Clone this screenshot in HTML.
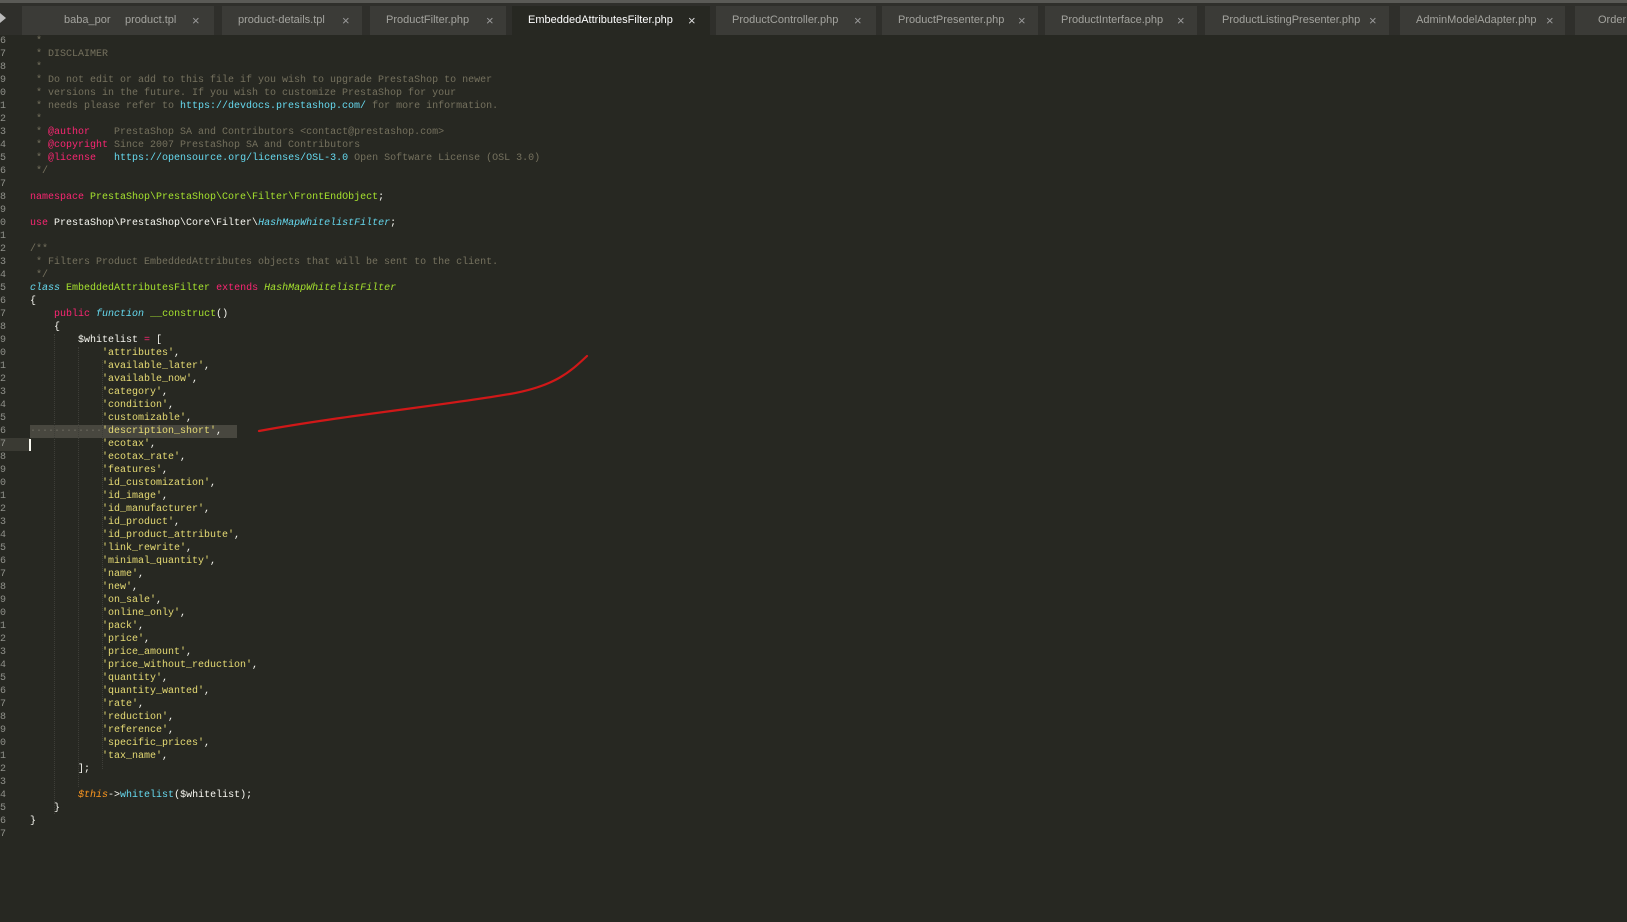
<!DOCTYPE html>
<html><head><meta charset="utf-8"><style>
html,body{margin:0;padding:0;width:1627px;height:922px;overflow:hidden;background:#272822;}
#tabs{position:absolute;left:0;top:0;width:1627px;height:35px;background:#2f2f2b;border-top:3px solid #5a5a56;box-sizing:border-box;}
.tab{position:absolute;top:3px;height:29px;background:#3b3b37;font:11px "Liberation Sans",sans-serif;color:#a3a39e;line-height:29px;white-space:nowrap;}
.tab.act{background:#272822;color:#fff;height:32px;}
.x{position:absolute;top:0;font-size:13px;color:#999;}
#ed{position:absolute;left:0;top:35px;font:10px/13px "Liberation Mono",monospace;color:#f8f8f2;white-space:pre;}
.ln{position:absolute;left:-4px;width:10px;text-align:right;color:#8f908a;}
.cd{position:absolute;left:30px;}
.c{color:#75715e}.k{color:#f92672}.g{color:#a6e22e}.b{color:#66d9ef}.i{font-style:italic}.s{color:#e6db74}.o{color:#fd971f}
.guide{position:absolute;width:0;border-left:1px dotted #3e3e38;}
</style></head><body>
<div id="tabs">
<div class="tab" style="left:22px;width:92px;"><span style="position:absolute;left:42px">baba_por</span></div>
<div class="tab" style="left:114px;width:100px;"><span style="position:absolute;left:11px">product.tpl</span><span class="x" style="left:78px">×</span></div>
<div class="tab" style="left:222px;width:140px;"><span style="position:absolute;left:16px">product-details.tpl</span><span class="x" style="left:120px">×</span></div>
<div class="tab" style="left:370px;width:136px;"><span style="position:absolute;left:16px">ProductFilter.php</span><span class="x" style="left:116px">×</span></div>
<div class="tab act" style="left:512px;width:198px;"><span style="position:absolute;left:16px">EmbeddedAttributesFilter.php</span><span class="x" style="left:176px;color:#ddd">×</span></div>
<div class="tab" style="left:716px;width:160px;"><span style="position:absolute;left:16px">ProductController.php</span><span class="x" style="left:138px">×</span></div>
<div class="tab" style="left:882px;width:156px;"><span style="position:absolute;left:16px">ProductPresenter.php</span><span class="x" style="left:136px">×</span></div>
<div class="tab" style="left:1045px;width:152px;"><span style="position:absolute;left:16px">ProductInterface.php</span><span class="x" style="left:132px">×</span></div>
<div class="tab" style="left:1205px;width:184px;"><span style="position:absolute;left:17px">ProductListingPresenter.php</span><span class="x" style="left:164px">×</span></div>
<div class="tab" style="left:1400px;width:165px;"><span style="position:absolute;left:16px">AdminModelAdapter.php</span><span class="x" style="left:146px">×</span></div>
<div class="tab" style="left:1575px;width:60px;"><span style="position:absolute;left:23px">Order</span></div>
<div style="position:absolute;left:0;top:10px;width:0;height:0;border-left:6px solid #bbb;border-top:5px solid transparent;border-bottom:5px solid transparent;"></div>
</div>
<div style="position:absolute;left:30px;top:425px;width:207px;height:13px;background:#48473f;"></div>
<div style="position:absolute;left:0;top:438px;width:30px;height:13px;background:#3a3a33;"></div>
<div style="position:absolute;left:29px;top:439px;width:2px;height:12px;background:#f8f8f0;"></div>
<div class="guide" style="left:54px;top:334px;height:480px"></div>
<div class="guide" style="left:78px;top:347px;height:440px"></div>
<div class="guide" style="left:102px;top:360px;height:409px"></div>
<div id="ed">
<div class="ln" style="top:0">6</div><div class="cd c" style="top:0"> *</div>
<div class="ln" style="top:13px">7</div><div class="cd c" style="top:13px"> * DISCLAIMER</div>
<div class="ln" style="top:26px">8</div><div class="cd c" style="top:26px"> *</div>
<div class="ln" style="top:39px">9</div><div class="cd c" style="top:39px"> * Do not edit or add to this file if you wish to upgrade PrestaShop to newer</div>
<div class="ln" style="top:52px">0</div><div class="cd c" style="top:52px"> * versions in the future. If you wish to customize PrestaShop for your</div>
<div class="ln" style="top:65px">1</div><div class="cd c" style="top:65px"> * needs please refer to <span class="b">https://devdocs.prestashop.com/</span> for more information.</div>
<div class="ln" style="top:78px">2</div><div class="cd c" style="top:78px"> *</div>
<div class="ln" style="top:91px">3</div><div class="cd c" style="top:91px"> * <span class="k">@author</span>    PrestaShop SA and Contributors &lt;contact@prestashop.com&gt;</div>
<div class="ln" style="top:104px">4</div><div class="cd c" style="top:104px"> * <span class="k">@copyright</span> Since 2007 PrestaShop SA and Contributors</div>
<div class="ln" style="top:117px">5</div><div class="cd c" style="top:117px"> * <span class="k">@license</span>   <span class="b">https://opensource.org/licenses/OSL-3.0</span> Open Software License (OSL 3.0)</div>
<div class="ln" style="top:130px">6</div><div class="cd c" style="top:130px"> */</div>
<div class="ln" style="top:143px">7</div>
<div class="ln" style="top:156px">8</div><div class="cd" style="top:156px"><span class="k">namespace</span> <span class="g">PrestaShop\PrestaShop\Core\Filter\FrontEndObject</span>;</div>
<div class="ln" style="top:169px">9</div>
<div class="ln" style="top:182px">0</div><div class="cd" style="top:182px"><span class="k">use</span> PrestaShop\PrestaShop\Core\Filter\<span class="b i">HashMapWhitelistFilter</span>;</div>
<div class="ln" style="top:195px">1</div>
<div class="ln" style="top:208px">2</div><div class="cd c" style="top:208px">/**</div>
<div class="ln" style="top:221px">3</div><div class="cd c" style="top:221px"> * Filters Product EmbeddedAttributes objects that will be sent to the client.</div>
<div class="ln" style="top:234px">4</div><div class="cd c" style="top:234px"> */</div>
<div class="ln" style="top:247px">5</div><div class="cd" style="top:247px"><span class="b i">class</span> <span class="g">EmbeddedAttributesFilter</span> <span class="k">extends</span> <span class="g i">HashMapWhitelistFilter</span></div>
<div class="ln" style="top:260px">6</div><div class="cd" style="top:260px">{</div>
<div class="ln" style="top:273px">7</div><div class="cd" style="top:273px">    <span class="k">public</span> <span class="b i">function</span> <span class="g">__construct</span>()</div>
<div class="ln" style="top:286px">8</div><div class="cd" style="top:286px">    {</div>
<div class="ln" style="top:299px">9</div><div class="cd" style="top:299px">        $whitelist <span class="k">=</span> [</div>
<div class="ln" style="top:312px">0</div><div class="cd s" style="top:312px">            'attributes'<span style="color:#f8f8f2">,</span></div>
<div class="ln" style="top:325px">1</div><div class="cd s" style="top:325px">            'available_later'<span style="color:#f8f8f2">,</span></div>
<div class="ln" style="top:338px">2</div><div class="cd s" style="top:338px">            'available_now'<span style="color:#f8f8f2">,</span></div>
<div class="ln" style="top:351px">3</div><div class="cd s" style="top:351px">            'category'<span style="color:#f8f8f2">,</span></div>
<div class="ln" style="top:364px">4</div><div class="cd s" style="top:364px">            'condition'<span style="color:#f8f8f2">,</span></div>
<div class="ln" style="top:377px">5</div><div class="cd s" style="top:377px">            'customizable'<span style="color:#f8f8f2">,</span></div>
<div class="ln" style="top:390px">6</div><div class="cd s" style="top:390px"><span style="color:#6e6d62">············</span>'description_short'<span style="color:#f8f8f2">,</span></div>
<div class="ln" style="top:403px">7</div><div class="cd s" style="top:403px">            'ecotax'<span style="color:#f8f8f2">,</span></div>
<div class="ln" style="top:416px">8</div><div class="cd s" style="top:416px">            'ecotax_rate'<span style="color:#f8f8f2">,</span></div>
<div class="ln" style="top:429px">9</div><div class="cd s" style="top:429px">            'features'<span style="color:#f8f8f2">,</span></div>
<div class="ln" style="top:442px">0</div><div class="cd s" style="top:442px">            'id_customization'<span style="color:#f8f8f2">,</span></div>
<div class="ln" style="top:455px">1</div><div class="cd s" style="top:455px">            'id_image'<span style="color:#f8f8f2">,</span></div>
<div class="ln" style="top:468px">2</div><div class="cd s" style="top:468px">            'id_manufacturer'<span style="color:#f8f8f2">,</span></div>
<div class="ln" style="top:481px">3</div><div class="cd s" style="top:481px">            'id_product'<span style="color:#f8f8f2">,</span></div>
<div class="ln" style="top:494px">4</div><div class="cd s" style="top:494px">            'id_product_attribute'<span style="color:#f8f8f2">,</span></div>
<div class="ln" style="top:507px">5</div><div class="cd s" style="top:507px">            'link_rewrite'<span style="color:#f8f8f2">,</span></div>
<div class="ln" style="top:520px">6</div><div class="cd s" style="top:520px">            'minimal_quantity'<span style="color:#f8f8f2">,</span></div>
<div class="ln" style="top:533px">7</div><div class="cd s" style="top:533px">            'name'<span style="color:#f8f8f2">,</span></div>
<div class="ln" style="top:546px">8</div><div class="cd s" style="top:546px">            'new'<span style="color:#f8f8f2">,</span></div>
<div class="ln" style="top:559px">9</div><div class="cd s" style="top:559px">            'on_sale'<span style="color:#f8f8f2">,</span></div>
<div class="ln" style="top:572px">0</div><div class="cd s" style="top:572px">            'online_only'<span style="color:#f8f8f2">,</span></div>
<div class="ln" style="top:585px">1</div><div class="cd s" style="top:585px">            'pack'<span style="color:#f8f8f2">,</span></div>
<div class="ln" style="top:598px">2</div><div class="cd s" style="top:598px">            'price'<span style="color:#f8f8f2">,</span></div>
<div class="ln" style="top:611px">3</div><div class="cd s" style="top:611px">            'price_amount'<span style="color:#f8f8f2">,</span></div>
<div class="ln" style="top:624px">4</div><div class="cd s" style="top:624px">            'price_without_reduction'<span style="color:#f8f8f2">,</span></div>
<div class="ln" style="top:637px">5</div><div class="cd s" style="top:637px">            'quantity'<span style="color:#f8f8f2">,</span></div>
<div class="ln" style="top:650px">6</div><div class="cd s" style="top:650px">            'quantity_wanted'<span style="color:#f8f8f2">,</span></div>
<div class="ln" style="top:663px">7</div><div class="cd s" style="top:663px">            'rate'<span style="color:#f8f8f2">,</span></div>
<div class="ln" style="top:676px">8</div><div class="cd s" style="top:676px">            'reduction'<span style="color:#f8f8f2">,</span></div>
<div class="ln" style="top:689px">9</div><div class="cd s" style="top:689px">            'reference'<span style="color:#f8f8f2">,</span></div>
<div class="ln" style="top:702px">0</div><div class="cd s" style="top:702px">            'specific_prices'<span style="color:#f8f8f2">,</span></div>
<div class="ln" style="top:715px">1</div><div class="cd s" style="top:715px">            'tax_name'<span style="color:#f8f8f2">,</span></div>
<div class="ln" style="top:728px">2</div><div class="cd" style="top:728px">        ];</div>
<div class="ln" style="top:741px">3</div>
<div class="ln" style="top:754px">4</div><div class="cd" style="top:754px">        <span class="o i">$this</span>-&gt;<span class="b">whitelist</span>($whitelist);</div>
<div class="ln" style="top:767px">5</div><div class="cd" style="top:767px">    }</div>
<div class="ln" style="top:780px">6</div><div class="cd" style="top:780px">}</div>
<div class="ln" style="top:793px">7</div>
</div>
<svg style="position:absolute;left:0;top:0" width="1627" height="922"><path d="M259 431 C 340 416, 440 406, 510 394 C 555 386, 570 372, 587 356" fill="none" stroke="#d01818" stroke-width="2.2" stroke-linecap="round"/></svg>
</body></html>
